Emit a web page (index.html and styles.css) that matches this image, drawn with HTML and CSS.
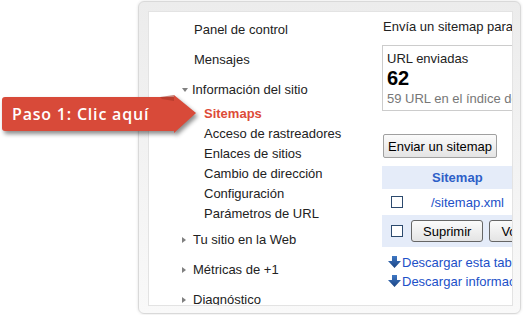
FILE: index.html
```html
<!DOCTYPE html>
<html lang="es">
<head>
<meta charset="utf-8">
<title>Sitemaps</title>
<link rel="stylesheet" href="styles.css">
</head>
<body>
<div class="frame">
  <div class="panel">
    <nav class="nav">
      <div class="item">Panel de control</div>
      <div class="item">Mensajes</div>
      <div class="item with-tri"><span class="tri down"></span>Información del sitio</div>
      <ul class="sub">
        <li class="active">Sitemaps</li>
        <li>Acceso de rastreadores</li>
        <li>Enlaces de sitios</li>
        <li>Cambio de dirección</li>
        <li>Configuración</li>
        <li>Parámetros de URL</li>
      </ul>
      <div class="item with-tri"><span class="tri right"></span>Tu sitio en la Web</div>
      <div class="item with-tri"><span class="tri right"></span>Métricas de +1</div>
      <div class="item with-tri"><span class="tri right"></span>Diagnóstico</div>
    </nav>
    <main class="content">
      <div class="intro">Envía un sitemap para mejorar la indexación de tu sitio.</div>
      <div class="stat">
        <div class="stat-label">URL enviadas</div>
        <div class="stat-num">62</div>
        <div class="stat-note">59 URL en el índice de Google</div>
      </div>
      <button class="btn btn-submit">Enviar un sitemap</button>
      <div class="table">
        <div class="trow thead">
          <div class="c1"></div>
          <div class="c2">Sitemap</div>
        </div>
        <div class="trow tbody">
          <div class="c1"><span class="check"></span></div>
          <div class="c2 link">/sitemap.xml</div>
        </div>
        <div class="trow tfoot">
          <span class="check"></span>
          <button class="btn btn-row">Suprimir</button>
          <button class="btn btn-row">Volver a enviar</button>
        </div>
      </div>
      <div class="downloads">
        <div class="dl"><svg class="dl-icon" viewBox="0 0 13 12" width="13" height="12"><defs><linearGradient id="g1" x1="0" y1="0" x2="0" y2="1"><stop offset="0" stop-color="#3f78c4"/><stop offset="1" stop-color="#1b4484"/></linearGradient></defs><path d="M4 0H9V5H13L6.5 12L0 5H4Z" fill="url(#g1)"/></svg><span class="link">Descargar esta tabla</span></div>
        <div class="dl"><svg class="dl-icon" viewBox="0 0 13 12" width="13" height="12"><path d="M4 0H9V5H13L6.5 12L0 5H4Z" fill="url(#g1)"/></svg><span class="link">Descargar información del índice</span></div>
      </div>
    </main>
  </div>
</div>
<div class="callout">
  <svg class="callout-shape" viewBox="0 0 200 50" width="200" height="50">
    <rect x="2" y="7" width="174" height="34" rx="3" fill="#d84a39"/>
    <polygon points="174,5 196,23 174,43" fill="#d84a39"/>
    <polygon points="160,7 174,5 174,11 162,9" fill="#a93626" opacity="0.6"/>
  </svg>
  <span class="callout-text">Paso 1: Clic aquí</span>
</div>
</body>
</html>
```
FILE: styles.css
```css
html, body {
  margin: 0;
  padding: 0;
}
body {
  width: 523px;
  height: 315px;
  overflow: hidden;
  background: #ffffff;
  position: relative;
  font-family: "Liberation Sans", Arial, sans-serif;
  font-size: 13px;
  color: #222222;
}
.frame {
  margin: 1px 0 0 138px;
  width: 365px;
  height: 295px;
  padding: 9px 7px 7px 9px;
  border: 1px solid #d9d9d9;
  border-radius: 6px;
  background: linear-gradient(#ececec, #f9f9f9);
  box-shadow: 0 0 3px rgba(0, 0, 0, 0.12);
}
.panel {
  width: 363px;
  height: 293px;
  border: 1px solid #e3e3e3;
  background: #ffffff;
  display: flex;
  overflow: hidden;
}
.nav {
  width: 233px;
  flex: none;
  padding-top: 3px;
}
.item {
  height: 30px;
  line-height: 30px;
  padding-left: 45px;
  display: flex;
  align-items: center;
  white-space: nowrap;
}
.item.with-tri {
  padding-left: 33px;
}
.tri {
  display: inline-block;
  width: 0;
  height: 0;
}
.tri.down {
  border-top: 4px solid #808080;
  border-left: 3.5px solid transparent;
  border-right: 3.5px solid transparent;
  margin-right: 4px;
}
.tri.right {
  border-left: 4px solid #808080;
  border-top: 3.5px solid transparent;
  border-bottom: 3.5px solid transparent;
  margin-right: 7px;
}
.sub {
  list-style: none;
  margin: -1px 0 0 0;
  padding: 0 0 1px 55px;
}
.sub li {
  height: 20px;
  line-height: 20px;
  white-space: nowrap;
}
.sub li.active {
  color: #dd4b39;
  font-weight: bold;
}
.content {
  flex: none;
  width: 200px;
  white-space: nowrap;
}
.intro {
  height: 28px;
  line-height: 28px;
  padding-top: 1px;
  margin-left: 1px;
}
.stat {
  margin-top: 4px;
  width: 190px;
  border: 1px solid #cccccc;
  padding: 5px 5px 3px 4px;
}
.stat-label {
  line-height: 16px;
}
.stat-num {
  font-size: 20px;
  font-weight: bold;
  line-height: 22px;
  color: #000000;
}
.stat-note {
  margin-top: 2px;
  line-height: 16px;
  color: #777777;
}
.btn {
  font-family: "Liberation Sans", Arial, sans-serif;
  font-size: 13px;
  color: #000000;
  background: linear-gradient(#fbfbfb, #e4e4e4);
  margin: 0;
  white-space: nowrap;
}
.btn-submit {
  display: block;
  margin: 23px 0 0 1px;
  height: 24px;
  padding: 0 4px;
  border: 1px solid #a0a0a0;
  border-radius: 2px;
}
.table {
  margin-top: 8px;
  width: 200px;
}
.trow {
  display: flex;
  align-items: center;
}
.c1 {
  width: 40px;
  flex: none;
  padding-left: 9px;
  box-sizing: border-box;
  display: flex;
  align-items: center;
}
.c2 {
  padding-left: 9px;
}
.thead {
  height: 23px;
  background: #e5ecf9;
}
.thead .c2 {
  font-weight: bold;
  color: #2d5fc8;
  padding-left: 10px;
}
.tbody {
  height: 26px;
}
.tfoot {
  height: 32px;
  background: #e5ecf9;
  padding-left: 9px;
}
.check {
  display: inline-block;
  width: 10px;
  height: 10px;
  border: 1px solid #2c4a6e;
  background: #ffffff;
  flex: none;
}
.tfoot .check {
  margin-right: 8px;
}
.btn-row {
  height: 22px;
  padding: 0 11px;
  border: 1px solid #666666;
  border-radius: 3px;
  margin-right: 6px;
}
.link {
  color: #2150c8;
}
.downloads {
  margin-top: 6px;
  padding-left: 6px;
}
.dl {
  height: 19px;
  display: flex;
  align-items: center;
  white-space: nowrap;
}
.dl-icon {
  flex: none;
  margin-right: 1px;
  margin-top: -2px;
}
.callout {
  position: absolute;
  left: 0;
  top: 90px;
  width: 200px;
  height: 48px;
  display: flex;
  align-items: center;
}
.callout-shape {
  position: absolute;
  left: 0;
  top: 0;
  filter: drop-shadow(2px 3px 2px rgba(0, 0, 0, 0.45));
}
.callout-text {
  position: relative;
  padding-left: 12px;
  font-family: "Open Sans", "Liberation Sans", sans-serif;
  font-weight: 600;
  font-size: 16px;
  letter-spacing: 0.8px;
  color: #ffffff;
}
```
